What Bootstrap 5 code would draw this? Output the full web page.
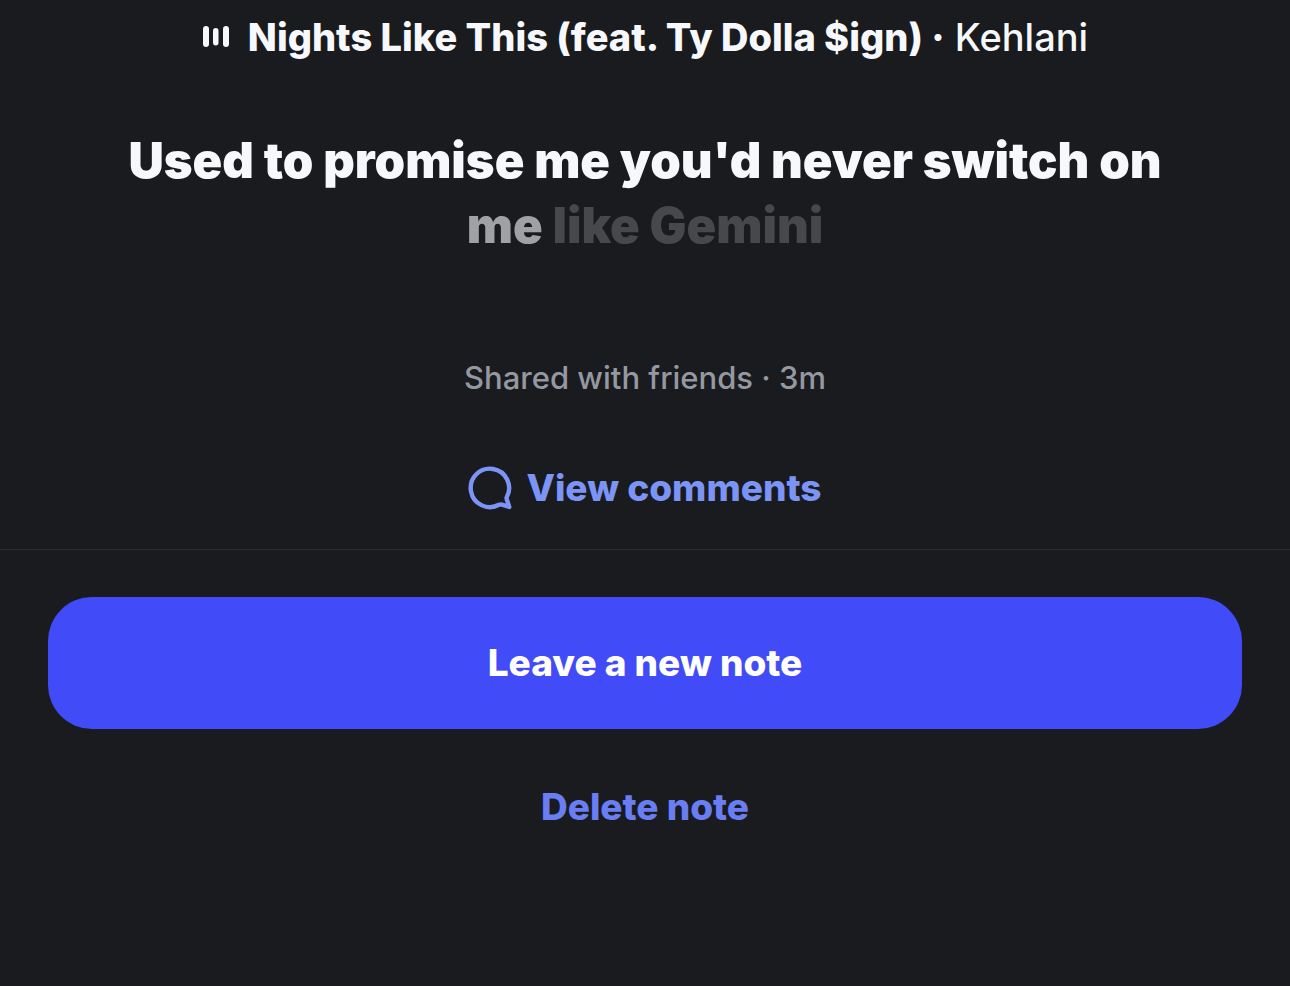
<!DOCTYPE html>
<html lang="en">
<head>
<meta charset="utf-8">
<meta name="viewport" content="width=device-width, initial-scale=1">
<title>Note</title>
<link href="https://cdn.jsdelivr.net/npm/bootstrap@5.3.0/dist/css/bootstrap.min.css" rel="stylesheet">
<style>
body{background:#1a1b1e;color:#f6f8fc;font-family:Inter,"Liberation Sans",sans-serif}
.song{font-size:38px;line-height:44px;font-weight:500;padding-top:15px}
.song strong{font-weight:800}
.lyrics{font-size:49px;line-height:65px;font-weight:900;margin:69px 0 0}
.sung{color:#a0a1a4}
.upcoming{color:#47484b}
.meta{font-size:31px;line-height:40px;font-weight:500;color:#9499a1;margin:100px 0 0}
.comments{font-size:37px;line-height:48px;font-weight:800;color:#7b94f5;margin-top:66px;gap:14px}
.actions{border-top:1px solid #292b2e;margin-top:33px;padding:47px 48px 0}
.note-btn{font-size:37px;line-height:48px;font-weight:800;border:0}
.leave{--bs-btn-bg:#414bf8;--bs-btn-hover-bg:#353fe0;--bs-btn-color:#fff;--bs-btn-hover-color:#fff;border-radius:44px;padding:42px 0}
.delete{color:#697ef2;margin-top:48px;padding:6px 24px}
</style>
</head>
<body>
<main class="text-center">
<header class="song d-flex justify-content-center align-items-center">
<svg class="me-3" width="30" height="26" viewBox="0 0 30 26" fill="currentColor" aria-hidden="true"><rect x="1" y="2" width="6" height="21" rx="3"/><rect x="11" y="4" width="5.500" height="17.500" rx="2.750"/><rect x="21" y="2" width="6" height="21" rx="3"/></svg>
<span><strong>Nights Like This (feat. Ty Dolla $ign) ·</strong> Kehlani</span>
</header>
<h1 class="lyrics">Used to promise me you'd never switch on<br><span class="sung">me</span> <span class="upcoming">like Gemini</span></h1>
<p class="meta">Shared with friends · 3m</p>
<a href="#" class="comments d-inline-flex align-items-center text-decoration-none">
<svg width="44" height="44" viewBox="0 0 44 44" fill="none" stroke="currentColor" stroke-width="4.400" stroke-linejoin="round" aria-hidden="true"><path d="M38.800 31A19.200 19.200 0 1 0 31 38.800Q32.500 38.200 34 38.700L41.300 41L39 34Q38.200 32.500 38.800 31Z"/></svg>View comments</a>
<section class="actions">
<button type="button" class="btn note-btn leave w-100">Leave a new note</button>
<button type="button" class="btn note-btn delete">Delete note</button>
</section>
</main>
<script src="https://cdn.jsdelivr.net/npm/bootstrap@5.3.0/dist/js/bootstrap.bundle.min.js"></script>
</body>
</html>
